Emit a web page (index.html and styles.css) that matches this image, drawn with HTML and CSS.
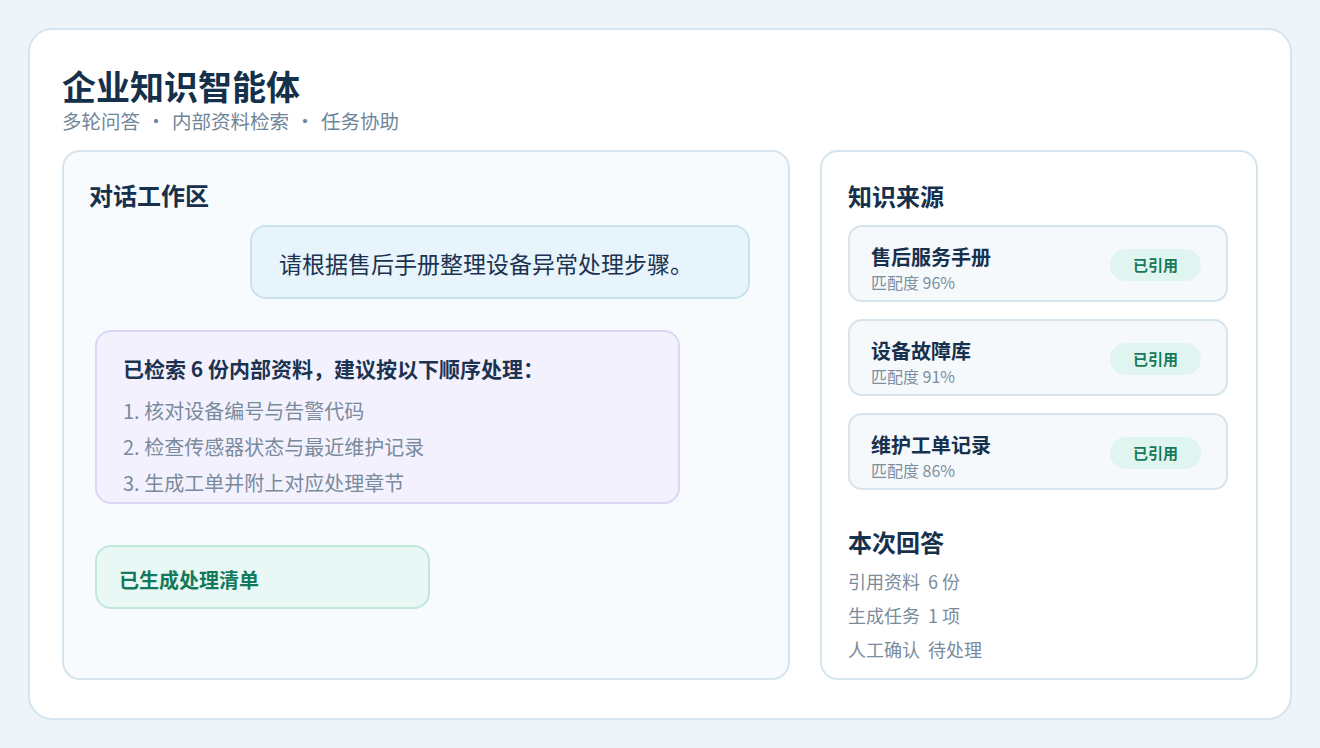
FILE: index.html
```html
<!DOCTYPE html>
<html lang="zh-CN">
<head>
<meta charset="utf-8">
<title>企业知识智能体</title>
<link rel="stylesheet" href="styles.css">
</head>
<body>
<div class="page">
  <div class="card">
    <h1 class="title">企业知识智能体</h1>
    <div class="subtitle">多轮问答<span class="sep">·</span>内部资料检索<span class="sep">·</span>任务协助</div>
    <div class="main">
      <section class="panel chat">
        <h2 class="panel-title">对话工作区</h2>
        <div class="bubble user">请根据售后手册整理设备异常处理步骤。</div>
        <div class="bubble assistant">
          <div class="a-title">已检索 6 份内部资料，建议按以下顺序处理：</div>
          <ol class="steps">
            <li>1. 核对设备编号与告警代码</li>
            <li>2. 检查传感器状态与最近维护记录</li>
            <li>3. 生成工单并附上对应处理章节</li>
          </ol>
        </div>
        <div class="bubble done">已生成处理清单</div>
      </section>
      <aside class="panel side">
        <h2 class="panel-title">知识来源</h2>
        <div class="sources">
          <div class="source">
            <div class="source-info">
              <div class="source-name">售后服务手册</div>
              <div class="source-match">匹配度 96%</div>
            </div>
            <span class="badge">已引用</span>
          </div>
          <div class="source">
            <div class="source-info">
              <div class="source-name">设备故障库</div>
              <div class="source-match">匹配度 91%</div>
            </div>
            <span class="badge">已引用</span>
          </div>
          <div class="source">
            <div class="source-info">
              <div class="source-name">维护工单记录</div>
              <div class="source-match">匹配度 86%</div>
            </div>
            <span class="badge">已引用</span>
          </div>
        </div>
        <h2 class="panel-title summary-title">本次回答</h2>
        <ul class="summary">
          <li><span class="k">引用资料</span><span class="v">6 份</span></li>
          <li><span class="k">生成任务</span><span class="v">1 项</span></li>
          <li><span class="k">人工确认</span><span class="v">待处理</span></li>
        </ul>
      </aside>
    </div>
  </div>
</div>
</body>
</html>
```

FILE: styles.css
```css
* { box-sizing: border-box; }
html, body { margin: 0; padding: 0; }
body {
  background: #eef5f9;
  font-family: "Noto Sans CJK SC", "Noto Sans", sans-serif;
  color: #17304c;
}
.page {
  width: 1320px;
  height: 748px;
  padding: 28px;
}
.card {
  height: 692px;
  background: #ffffff;
  border: 2px solid #d5e4ed;
  border-radius: 24px;
  padding: 36px 32px 38px;
  display: flex;
  flex-direction: column;
}
.title {
  margin: 0;
  font-size: 34px;
  line-height: 40px;
  font-weight: 700;
  color: #14304b;
}
.subtitle {
  margin-top: 1px;
  font-size: 19.5px;
  line-height: 28px;
  color: #6f8599;
}
.sep {
  display: inline-block;
  width: 32px;
  text-align: center;
}
.main {
  margin-top: 15px;
  flex: 1;
  display: flex;
  gap: 30px;
}
.panel {
  border: 2px solid #d5e4ed;
  border-radius: 18px;
  display: flex;
  flex-direction: column;
}
.chat {
  width: 728px;
  background: #f7fbfe;
  padding: 27px 25px 0 25px;
}
.side {
  flex: 1;
  background: #ffffff;
  padding: 28px 28px 0 26px;
}
.panel-title {
  margin: 0;
  font-size: 24px;
  line-height: 32px;
  font-weight: 700;
  color: #17304c;
}
.bubble {
  border: 2px solid;
  border-radius: 16px;
}
.user {
  align-self: flex-end;
  margin-top: 14px;
  margin-right: 13px;
  width: 500px;
  background: #e8f4fb;
  border-color: #c9e2ef;
  padding: 21px 27px 19px;
  font-size: 23px;
  line-height: 30px;
  color: #1b3350;
}
.assistant {
  margin-top: 31px;
  margin-left: 6px;
  width: 585px;
  background: #f3f1fe;
  border-color: #dcd6f4;
  padding: 22px 26px 1px;
}
.a-title {
  font-size: 21px;
  line-height: 28px;
  font-weight: 700;
  color: #1b3350;
}
.steps {
  list-style: none;
  margin: 11px 0 0;
  padding: 0;
}
.steps li {
  font-size: 20px;
  line-height: 36px;
  color: #7a8b9c;
}
.done {
  margin-top: 41px;
  margin-left: 6px;
  width: 335px;
  background: #eaf8f5;
  border-color: #bfe7da;
  padding: 19px 22px 13px;
  font-size: 20px;
  line-height: 28px;
  font-weight: 700;
  color: #13795a;
}
.sources {
  margin-top: 13px;
  display: flex;
  flex-direction: column;
  gap: 17px;
}
.source {
  height: 77px;
  background: #f5f9fc;
  border: 2px solid #d5e4ed;
  border-radius: 14px;
  padding: 17px 25px 7px 21px;
  display: flex;
  align-items: center;
  justify-content: space-between;
}
.source-info {
  align-self: flex-start;
}
.source-name {
  font-size: 20px;
  line-height: 26px;
  font-weight: 700;
  color: #17304c;
}
.source-match {
  margin-top: 1px;
  font-size: 16px;
  line-height: 22px;
  color: #7c8ea0;
}
.badge {
  width: 91px;
  height: 32px;
  margin-top: -8px;
  border-radius: 16px;
  background: #e0f5f0;
  color: #17785a;
  font-size: 15px;
  font-weight: 700;
  line-height: 32px;
  text-align: center;
}
.summary-title {
  margin-top: 36px;
}
.summary {
  list-style: none;
  margin: 6px 0 0;
  padding: 0;
}
.summary li {
  display: flex;
  gap: 8px;
  font-size: 18px;
  line-height: 34px;
  color: #7a8b9c;
}
```
